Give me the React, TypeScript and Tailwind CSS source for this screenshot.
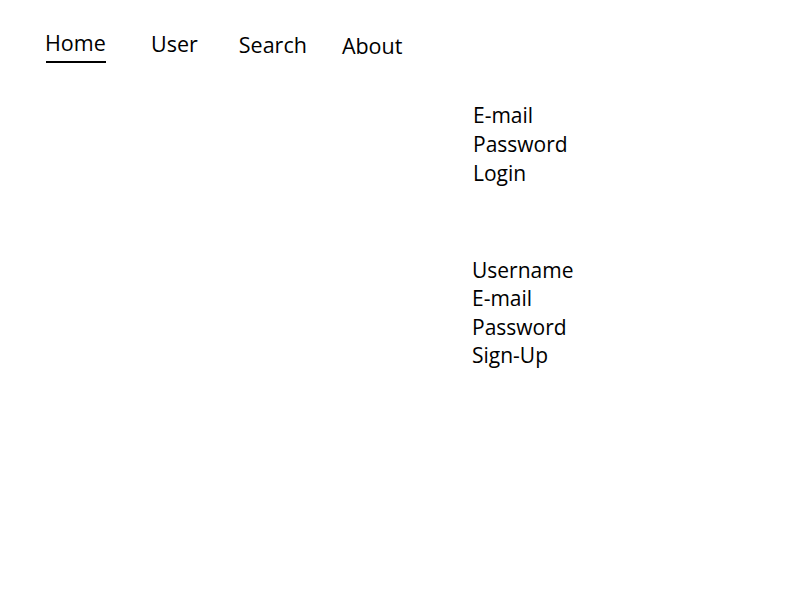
export default function App() {
  const font = { fontFamily: '"Open Sans", "Noto Sans", sans-serif' };
  return (
    <div className="w-[800px] h-[600px] bg-white text-black relative" style={font}>
      <nav className="flex items-start pt-[28px] pl-[45px] text-[21.5px] leading-[29px]">
        <div className="flex flex-col w-[62px]">
          <span>Home</span>
          <div className="h-[1.5px] bg-black mt-[4px] ml-[1px] w-[60px]"></div>
        </div>
        <span className="ml-[44px] mt-[1px]">User</span>
        <span className="ml-[41px] mt-[2px]">Search</span>
        <span className="ml-[35px] mt-[3px]">About</span>
      </nav>
      <div className="flex flex-col pl-[473px] pt-[38px] text-[21px] leading-[29px]">
        <div className="flex flex-col">
          <span>E-mail</span>
          <span>Password</span>
          <span>Login</span>
        </div>
        <div className="flex flex-col mt-[68px] -ml-[1px] leading-[28.5px]">
          <span>Username</span>
          <span>E-mail</span>
          <span>Password</span>
          <span>Sign-Up</span>
        </div>
      </div>
    </div>
  );
}
